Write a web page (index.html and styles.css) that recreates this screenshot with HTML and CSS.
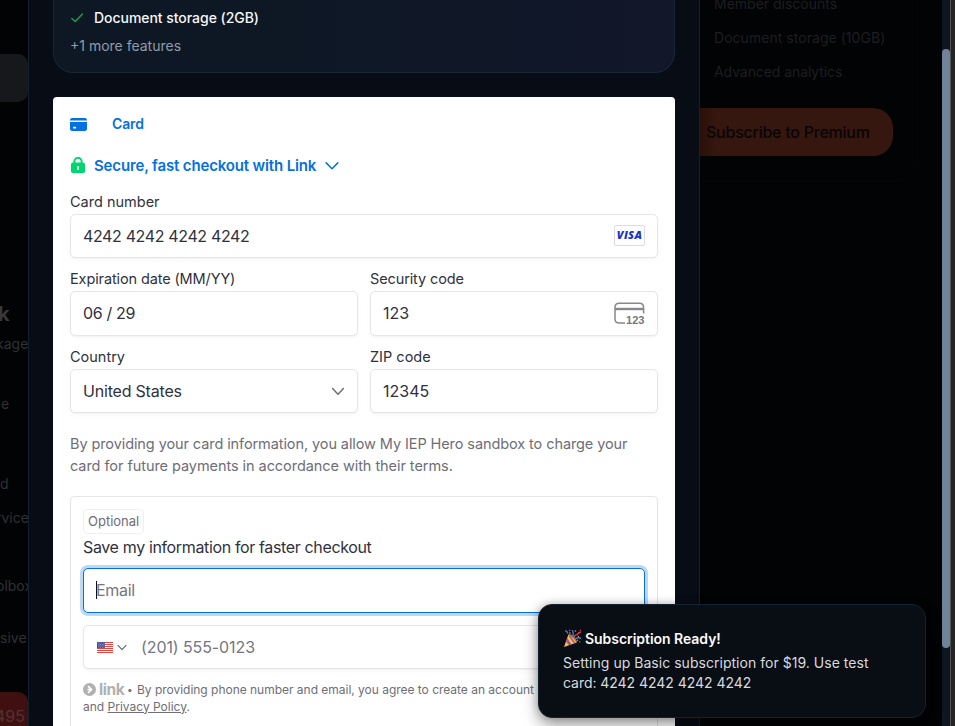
FILE: index.html
```html
<!DOCTYPE html>
<html lang="en">
<head>
<meta charset="utf-8">
<title>Subscribe</title>
<link rel="stylesheet" href="styles.css">
</head>
<body>
<div class="page">
  <aside class="behind-left">
    <div class="ghost-tab"></div>
    <h3 class="ghost-title"><span>k</span></h3>
    <p class="g1"><span>kage</span></p>
    <p class="g2"><span>e</span></p>
    <p class="g3"><span>d</span></p>
    <p class="g4"><span>rvice</span></p>
    <p class="g5"><span>olbox</span></p>
    <p class="g6"><span>sive</span></p>
    <div class="ghost-price"><span>495</span></div>
  </aside>

  <main class="modal">
    <section class="plan">
      <div class="feature">
        <svg width="14" height="14" viewBox="0 0 14 14" fill="none" stroke="#16a34a" stroke-width="1.4" stroke-linecap="round" stroke-linejoin="round"><path d="M1.8 7.4 5.2 10.6 12.4 3"/></svg>
        <span class="t-feature">Document storage (2GB)</span>
      </div>
      <div class="more"><span class="t-more">+1 more features</span></div>
    </section>

    <section class="payment">
      <div class="tab">
        <svg width="17" height="13" viewBox="0 0 17 13"><path fill="#0570de" d="M0 2.1Q0 0 2.1 0H14.9Q17 0 17 2.1V2.4H0ZM0 4H17V10.8Q17 13 14.8 13H2.2Q0 13 0 10.8Z"/><rect x="3" y="8.8" width="3.2" height="1.8" rx=".9" fill="#fff"/></svg>
        <span class="t-card">Card</span>
      </div>
      <div class="link-row">
        <svg width="14" height="16" viewBox="0 0 14 16"><path d="M3.4 7V4.4a3.6 3.6 0 0 1 7.2 0V7" fill="none" stroke="#00d66f" stroke-width="2"/><rect y="5.6" width="14" height="10.4" rx="1.8" fill="#00d66f"/><rect x="6.1" y="9" width="1.8" height="4" rx=".6" fill="#fff"/></svg>
        <span class="t-secure">Secure, fast checkout with Link</span>
        <svg width="14" height="9" viewBox="0 0 14 9" fill="none" stroke="#0570de" stroke-width="1.5" stroke-linecap="round" stroke-linejoin="round"><path d="m1.2 1.9 5.8 5.8 5.8-5.8"/></svg>
      </div>

      <div class="field">
        <label><span class="t-cn">Card number</span></label>
        <div class="input"><span class="t-num">4242 4242 4242 4242</span>
          <span class="visa"><span>VISA</span></span>
        </div>
      </div>
      <div class="pair">
        <div class="field">
          <label><span class="t-exp">Expiration date (MM/YY)</span></label>
          <div class="input tall"><span class="t-date">06 / 29</span></div>
        </div>
        <div class="field">
          <label><span class="t-sec">Security code</span></label>
          <div class="input tall"><span class="t-123">123</span>
            <svg class="cvc" width="31" height="23" viewBox="0 0 31 23"><path d="M11 20.9H5.2Q1 20.9 1 16.9V5.5Q1 1.3 5.2 1.3H25.4Q29.6 1.3 29.6 5.5V11.5" fill="none" stroke="#87878f" stroke-width="1.5"/><path d="M1 7H29.6" stroke="#87878f" stroke-width="2.4"/><text x="12" y="22" textLength="18.5" lengthAdjust="spacingAndGlyphs">123</text></svg>
          </div>
        </div>
      </div>
      <div class="pair">
        <div class="field">
          <label><span class="t-country">Country</span></label>
          <div class="input"><span class="t-us">United States</span>
            <svg width="14" height="9" viewBox="0 0 14 9" fill="none" stroke="#6d6e78" stroke-width="1.5" stroke-linecap="round" stroke-linejoin="round"><path d="m1.6 1.6 5.4 5.6 5.4-5.6"/></svg>
          </div>
        </div>
        <div class="field">
          <label><span class="t-zip">ZIP code</span></label>
          <div class="input"><span class="t-12345">12345</span></div>
        </div>
      </div>

      <p class="terms"><span class="t-terms1">By providing your card information, you allow My IEP Hero sandbox to charge your</span><br><span class="t-terms2">card for future payments in accordance with their terms.</span></p>

      <div class="save">
        <span class="badge"><span class="t-opt">Optional</span></span>
        <div class="save-title"><span class="t-save">Save my information for faster checkout</span></div>
        <div class="input tall focus"><i class="caret"></i><span class="t-email">Email</span></div>
        <div class="input phone">
          <svg class="flag" width="16" height="11" viewBox="0 0 16 11"><rect width="16" height="11" rx="1" fill="#fff"/><path d="M0 .5H16M0 2.5H16M0 4.5H16M0 6.5H16M0 8.5H16M0 10.5H16" stroke="#e0453f" stroke-width="1"/><rect width="8" height="6" fill="#41479b"/><path d="M.8 1H8M1.6 2.4H8M.8 3.8H8M1.6 5.2H8" stroke="#fff" stroke-width=".6" stroke-dasharray=".7 1"/></svg>
          <svg class="mini" width="10" height="7" viewBox="0 0 10 7" fill="none" stroke="#6d6e78" stroke-width="1.3" stroke-linecap="round" stroke-linejoin="round"><path d="m1 1.4 4 4.2 4-4.2"/></svg>
          <span class="t-phone">(201) 555-0123</span>
        </div>
        <div class="legal">
          <div class="legal-line">
            <svg width="13" height="13" viewBox="0 0 13 13"><circle cx="6.5" cy="6.5" r="6.5" fill="#b0b0b2"/><path d="M5 3.2 8.5 6.5 5 9.8M8.2 6.5H4.4" fill="none" stroke="#fff" stroke-width="1.7"/></svg>
            <b class="t-link">link</b><span class="dot">•</span>
            <span class="t-legal">By providing phone number and email, you agree to create an account subject to</span>
          </div>
          <div class="legal-line"><span class="t-priv">and <u>Privacy Policy</u>.</span></div>
        </div>
      </div>
    </section>
  </main>

  <aside class="behind-right">
    <div class="premium">
      <p><span class="t-mem">Member discounts</span></p>
      <p><span class="t-doc">Document storage (10GB)</span></p>
      <p><span class="t-adv">Advanced analytics</span></p>
      <div class="subscribe"><span class="t-sub">Subscribe to Premium</span></div>
    </div>
  </aside>
  <div class="scrollbar"><div class="thumb"></div></div>
  <div class="edge"></div>
</div>

<div class="toast">
  <div class="toast-title">
    <svg width="19" height="19" viewBox="0 0 19 19"><path d="M1 18 5.4 5.4Q11 8 13.8 13.4Z" fill="#fbc02d"/><path d="M4.2 9 8.4 15.3 6 16.3 3 12.4ZM6.8 6.3 12.5 13.9 11 14.4 5.7 7.2Z" fill="#9b4fc4"/><path d="M6 5.3Q11.5 7.5 13.6 12.8" stroke="#b87320" stroke-width="1.3" fill="none"/><path d="M9.3 7.8Q11.4 5 9.2 1M2 1.6Q4.7 2.2 4.8 4.8" stroke="#3976d1" stroke-width="1.4" fill="none"/><path d="M12 10.2Q14 8.2 18 9.2" stroke="#3c82df" stroke-width="1.5" fill="none"/><path d="M10.8 8.5Q12 5.5 14.4 5.6 15.2 3.6 17.8 3" stroke="#df3d54" stroke-width="1.4" fill="none"/><g fill="#d83960"><circle cx="6.6" cy="1.4" r=".8"/><circle cx="12.4" cy="2" r=".9"/><circle cx="17.4" cy="1.3" r=".7"/><circle cx="16.8" cy="12.8" r=".8"/></g><g fill="#f6c344"><circle cx="7" cy="4" r=".7"/><circle cx="15.4" cy="7.6" r=".7"/><circle cx="14.6" cy="11.2" r=".6"/></g></svg>
    <span class="t-ready">Subscription Ready!</span>
  </div>
  <div class="toast-body"><span class="t-b1">Setting up Basic subscription for $19. Use test</span><br><span class="t-b2">card: 4242 4242 4242 4242</span></div>
</div>
</body>
</html>
```
FILE: styles.css
```css
* { box-sizing: border-box; }
body { margin: 0; overflow: hidden; background: #020305; font-family: Inter, "Liberation Sans", sans-serif; }
p, h3 { margin: 0; }
svg { display: block; flex: none; }
.page { display: grid; grid-template-columns: 28px 672px 242px 8px 5px; height: 726px; overflow: hidden; }

.behind-left { display: flex; flex-direction: column; overflow: hidden; background: #020304; color: #303134; font-size: 14px; line-height: 20px; white-space: nowrap; }
.behind-left > * { flex: none; }
.ghost-tab { margin-top: 54px; height: 48px; background: #17181b; border-radius: 0 10px 10px 0; }
.ghost-title { margin-top: 200px; font-size: 20px; line-height: 24px; color: #37383a; }
.g1 { margin-top: 8px; }
.g2 { margin-top: 40px; }
.g3 { margin-top: 60px; }
.g4 { margin-top: 14px; }
.g5 { margin-top: 48px; }
.g6 { margin-top: 32px; }
.ghost-title span { margin-left: -2px; }
.g1 span, .g4 span, .g5 span { margin-left: -4px; }
.g2 span { margin-left: 1px; }
.ghost-price { margin-top: 44px; height: 48px; padding-top: 14px; background: #401010; border-radius: 0 10px 0 0; color: #4f3335; font-size: 16px; }
.ghost-price span { margin-left: -5px; }

.modal { display: flex; flex-direction: column; gap: 24px; padding: 0 24px; background: #080c14; border: solid #122130; border-width: 0 1px; }
.plan { flex: none; height: 73px; padding: 8px 16px 0; border: 1px solid #162735; border-top: 0; border-radius: 0 0 20px 20px; background: linear-gradient(90deg, #0d1824 30%, #12172a); color: #f5f7fa; font-size: 14px; line-height: 20px; font-weight: 500; }
.feature { display: flex; align-items: center; gap: 10px; letter-spacing: -.04px; }
.more { margin-top: 8px; color: #919baa; font-weight: 400; }

.payment { flex: none; height: 660px; padding: 18px 17px 0; background: #fff; border-radius: 4px 4px 0 0; color: #30313d; }
.tab, .link-row { display: flex; align-items: center; color: #0570de; font-weight: 600; }
.tab { height: 18px; gap: 25px; font-size: 14px; }
.t-card { padding-bottom: 2px; }
.t-card, .t-secure { letter-spacing: -.15px; }
.link-row { height: 20px; margin-top: 22px; padding-left: 1px; gap: 9px; font-size: 15px; }
.field label { display: block; height: 20px; margin-bottom: 2px; font-size: 14.5px; line-height: 20px; }
.t-exp, .t-sec { letter-spacing: -.12px; }
.t-terms1 { letter-spacing: -.09px; }
.t-terms2 { letter-spacing: -.06px; }
.link-row + .field { margin-top: 17px; }
.pair { display: grid; grid-template-columns: 1fr 1fr; gap: 12px; margin-top: 11px; }
.input { display: flex; align-items: center; justify-content: space-between; height: 44px; padding: 0 12px; border: 1px solid #e6e6e6; border-radius: 5px; background: #fff; box-shadow: 0 1px 2px rgba(0,0,0,.04), 0 3px 6px rgba(0,0,0,.02); font-size: 16px; line-height: 20px; white-space: pre; }
.input.tall { height: 45px; padding-bottom: 1px; }
.t-num, .t-date, .t-save { letter-spacing: -.36px; }
.t-us { letter-spacing: -.2px; }
.t-email { letter-spacing: -.3px; }
.t-phone { letter-spacing: -.1px; }
.visa { display: flex; justify-content: center; align-items: center; width: 31px; height: 21px; margin-bottom: 2px; border: 1px solid #dcdce0; border-radius: 2px; font: italic 800 11px/20px "Open Sans", sans-serif; letter-spacing: .3px; color: #1a34c8; }
.cvc text { font: 700 10px "Liberation Sans", sans-serif; fill: #787882; }
.terms { margin-top: 20px; color: #6d6e78; font-size: 14.5px; line-height: 22px; white-space: nowrap; }
.save { height: 260px; margin-top: 19px; padding: 12px; border: 1px solid #e6e6e6; border-radius: 4px; }
.badge { display: block; width: 61px; height: 25px; padding-left: 4px; border: 1px solid #f0f0f1; border-radius: 4px; color: #6d6e78; font-size: 13px; line-height: 23px; white-space: nowrap; }
.save-title { height: 22px; margin-top: 2px; font-size: 16px; line-height: 22px; }
.input.focus { margin-top: 10px; border-color: #0570de; box-shadow: 0 0 0 3px #bdd9f6; justify-content: flex-start; color: #757680; }
.caret { width: 1px; height: 18px; background: #111; margin-right: -1px; }
.phone { margin-top: 12px; padding-left: 13px; justify-content: flex-start; color: #757680; }
.mini { margin: 0 14px 0 4px; }
.legal { margin-top: 11px; color: #6d6e78; font-size: 12px; line-height: 17px; }
.legal-line { display: flex; align-items: center; height: 18px; overflow: hidden; white-space: pre; }
.legal-line + .legal-line { margin-top: -1px; }
.legal-line svg { margin-right: 3px; }
.t-legal { letter-spacing: -.02px; }
.t-link { width: 25px; color: #b0b0b2; font-size: 15.5px; letter-spacing: -.4px; }
.dot { width: 13px; padding-left: 3px; font-size: 10px; }

.behind-right { overflow: hidden; background: #020304; color: #1d1e20; font-size: 14px; line-height: 20px; white-space: nowrap; }
.premium { display: flex; flex-direction: column; gap: 14px; width: 218px; height: 181px; border: solid #04070a; border-width: 0 1px 1px 0; border-radius: 0 0 20px 0; }
.premium p { padding-left: 14px; }
.premium p:first-child { margin-top: -6px; }
.t-doc { letter-spacing: .04px; }
.t-adv { letter-spacing: -.08px; }
.subscribe { width: 193px; height: 48px; margin-top: 12px; padding: 0 24px 0 6px; background: linear-gradient(90deg, #291007, #35170f 8%); border-radius: 0 20px 20px 0; color: #080506; font-size: 16px; font-weight: 500; line-height: 48px; letter-spacing: -.24px; }
.scrollbar { background: #0d1721; padding-top: 49px; }
.thumb { height: 599px; border-radius: 4px; background: #6f8498; }
.edge { background: #252525; border-left: 1px solid #545454; }

.toast { position: absolute; left: 538px; top: 604px; width: 388px; height: 114px; padding: 24px; border: 1px solid #15222f; border-radius: 14px; background: #090d14; box-shadow: 0 8px 16px rgba(0,0,0,.35), 0 0 8px rgba(0,0,0,.25); color: #d8dade; font-size: 14px; line-height: 20px; white-space: nowrap; }
.toast-title { display: flex; align-items: center; height: 20px; gap: 3px; color: #fafafa; font-weight: 600; letter-spacing: -.04px; }
.toast-title svg { margin-top: -2px; }
.toast-body { margin-top: 4px; }
.t-b1 { letter-spacing: .03px; }
.t-b2 { letter-spacing: -.04px; }
```
